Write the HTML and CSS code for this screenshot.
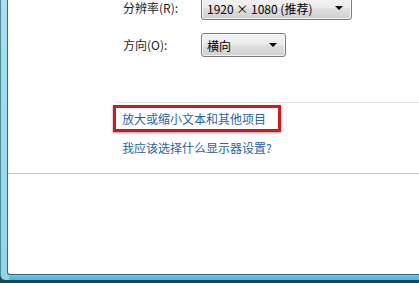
FILE: index.html
```html
<!DOCTYPE html>
<html lang="zh-CN">
<head>
<meta charset="utf-8">
<title>屏幕分辨率</title>
<link rel="stylesheet" href="styles.css">
</head>
<body>
<div class="frame">
  <div class="content">
    <div class="form">
      <div class="label">分辨率(R):</div>
      <div class="select select-wide"><span>1920 × 1080 (推荐)</span><i class="arrow"></i></div>
      <div class="label">方向(O):</div>
      <div class="select select-narrow"><span>横向</span><i class="arrow"></i></div>
    </div>
    <div class="rule-light"></div>
    <div class="highlight"><a class="link">放大或缩小文本和其他项目</a></div>
    <a class="link link-second">我应该选择什么显示器设置?</a>
    <div class="rule"></div>
  </div>
</div>
</body>
</html>
```
FILE: styles.css
```css
html, body {
  margin: 0;
  padding: 0;
}
body {
  width: 419px;
  height: 283px;
  overflow: hidden;
  background: #1d4450;
  font-family: "Noto Sans CJK SC", "Noto Sans", sans-serif;
  font-size: 12px;
}
.frame {
  box-sizing: border-box;
  width: 419px;
  height: 280px;
  padding: 0 0 5px 6px;
  background: linear-gradient(to bottom, #a9e0ee, #8dd6ec);
  border-left: 1px solid #4f8a98;
  border-bottom-left-radius: 5px;
  position: relative;
}
.frame::after {
  content: "";
  position: absolute;
  left: 8px;
  right: 0;
  bottom: 0;
  height: 5px;
  background: linear-gradient(to bottom, #6cc6e6, #4fb4dd);
}
.content {
  box-sizing: border-box;
  height: 275px;
  background: #fff;
  border-left: 1px solid #37697a;
  border-bottom: 1px solid #37697a;
  border-bottom-left-radius: 3px;
  padding-left: 115px;
  display: flex;
  flex-direction: column;
  align-items: flex-start;
  position: relative;
  z-index: 1;
}
.form {
  display: grid;
  grid-template-columns: 78px auto;
  grid-auto-rows: 24px;
  row-gap: 13px;
  align-items: center;
  margin-top: -4px;
}
.label {
  color: #1e1e1e;
  line-height: 16px;
}
.select {
  box-sizing: border-box;
  height: 24px;
  border: 1px solid #7b7b7b;
  border-radius: 3px;
  background: linear-gradient(to bottom, #f4f4f4 0%, #ececec 45%, #dedede 55%, #d0d0d0 100%);
  box-shadow: inset 0 0 0 1px rgba(255,255,255,0.7);
  display: flex;
  align-items: center;
  justify-content: space-between;
  padding: 0 8px 0 5px;
  color: #000;
}
.select-wide { width: 151px; }
.select-narrow { width: 85px; }
.arrow {
  width: 0;
  height: 0;
  border-left: 4px solid transparent;
  border-right: 4px solid transparent;
  border-top: 4px solid #000;
}
.rule-light {
  align-self: stretch;
  height: 1px;
  margin: 45px 0 0 -8px;
  background: #e4e4e4;
}
.highlight {
  box-sizing: border-box;
  width: 168px;
  height: 27px;
  margin: 2px 0 0 -10px;
  border: 3px solid #c81c24;
  box-shadow: 0 1px 2px rgba(90,0,0,0.45);
  padding-left: 6px;
  display: flex;
  align-items: center;
}
.link {
  color: #2a62a6;
  line-height: 16px;
  text-decoration: none;
}
.link-second {
  margin: 8px 0 0 -1px;
}
.rule {
  align-self: stretch;
  height: 1px;
  margin: 17px 0 0 -115px;
  background: #cacaca;
}
```
